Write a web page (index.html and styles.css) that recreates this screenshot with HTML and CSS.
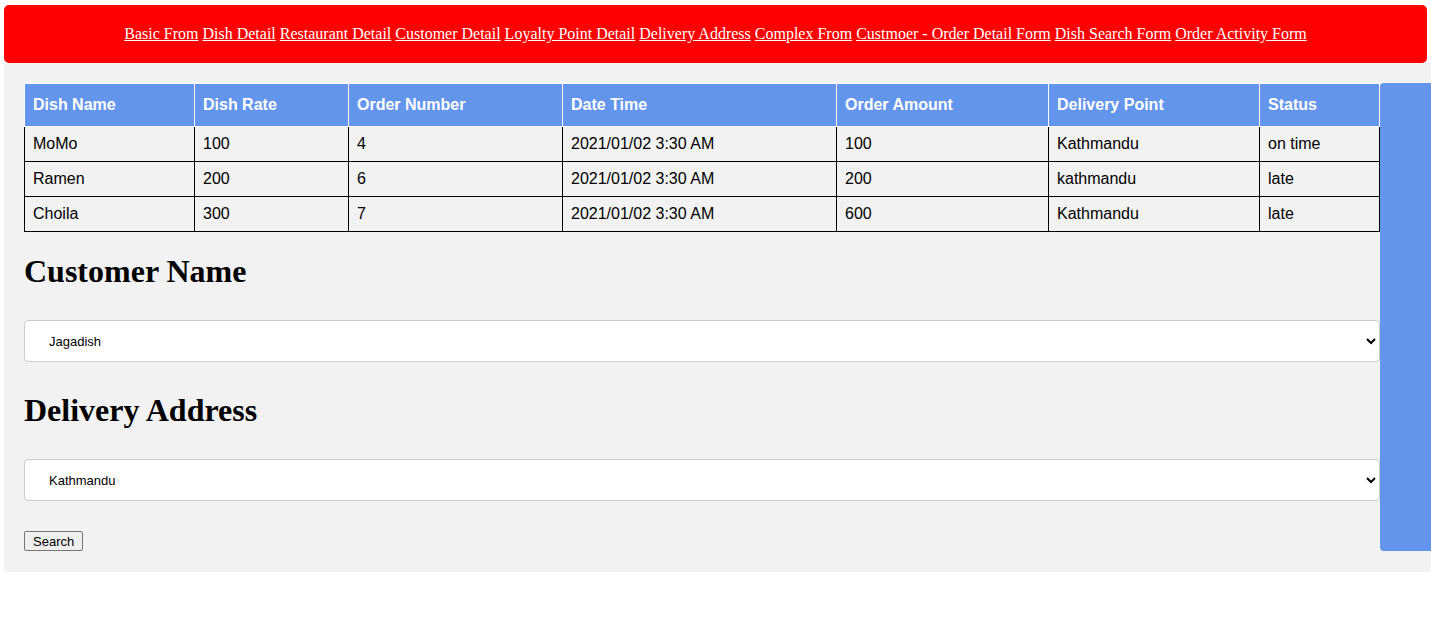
FILE: index.html
```html
<!DOCTYPE html>
<html>
<head>
<meta charset="utf-8">
<link rel="stylesheet" href="styles.css">
</head>
<body>
<nav class="topnav">
  <a href="#">Basic From</a> <a href="#">Dish Detail</a> <a href="#">Restaurant Detail</a> <a href="#">Customer Detail</a> <a href="#">Loyalty Point Detail</a> <a href="#">Delivery Address</a> <a href="#">Complex From</a> <a href="#">Custmoer - Order Detail Form</a> <a href="#">Dish Search Form</a> <a href="#">Order Activity Form</a>
</nav>
<div class="page">
  <main class="main">
    <table class="orders">
      <thead>
        <tr>
          <th class="c1">Dish Name</th><th class="c2">Dish Rate</th><th class="c3">Order Number</th><th class="c4">Date Time</th><th class="c5">Order Amount</th><th class="c6">Delivery Point</th><th class="c7">Status</th>
        </tr>
      </thead>
      <tbody>
        <tr><td>MoMo</td><td>100</td><td>4</td><td>2021/01/02 3:30 AM</td><td>100</td><td>Kathmandu</td><td>on time</td></tr>
        <tr><td>Ramen</td><td>200</td><td>6</td><td>2021/01/02 3:30 AM</td><td>200</td><td>kathmandu</td><td>late</td></tr>
        <tr><td>Choila</td><td>300</td><td>7</td><td>2021/01/02 3:30 AM</td><td>600</td><td>Kathmandu</td><td>late</td></tr>
      </tbody>
    </table>
    <h1 class="heading">Customer Name</h1>
    <select class="picker"><option>Jagadish</option></select>
    <h1 class="heading">Delivery Address</h1>
    <select class="picker"><option>Kathmandu</option></select>
    <div class="actions"><button class="btn">Search</button></div>
  </main>
  <aside class="side"></aside>
</div>
</body>
</html>
```
FILE: styles.css
```css
body {
  margin: 5px 0 0 4px;
  font-family: "Liberation Serif", "Times New Roman", serif;
  background: #fff;
}
.topnav {
  background: #ff0000;
  border-radius: 5px;
  margin-right: 4px;
  padding: 20px 10px 20px;
  text-align: center;
  font-size: 16px;
  line-height: 18px;
}
.topnav a { color: #fff; text-decoration: underline; }
.page {
  display: flex;
  background: #f2f2f2;
  padding: 20px 0 21px 20px;
  border-radius: 0 0 0 4px;
}
.main {
  flex: 1;
  display: flex;
  flex-direction: column;
  align-items: flex-start;
}
.side {
  width: 51px;
  background: #6495ed;
  border-radius: 4px 0 0 4px;
}
.orders {
  width: 100%;
  border-collapse: collapse;
  font-family: "Liberation Sans", Arial, sans-serif;
  font-size: 16px;
}
.orders th {
  background: #6495ed;
  color: #fff;
  text-align: left;
  font-weight: bold;
  border: 1px solid #fff;
  padding: 0 8px;
  height: 42px;
}
.orders td {
  border: 1px solid #000;
  padding: 0 8px;
  height: 34px;
  color: #000;
}
.c1 { width: 153px; }
.c2 { width: 137px; }
.c3 { width: 197px; }
.c4 { width: 257px; }
.c5 { width: 195px; }
.c6 { width: 194px; }
.heading {
  font-size: 32px;
  font-weight: bold;
  margin: 21px 0 0;
  line-height: 37px;
}
.picker {
  width: 100%;
  height: 42px;
  margin-top: 30px;
  padding: 0 20px;
  background: #fff;
  border: 1px solid #ccc;
  border-radius: 4px;
  font-family: "Liberation Sans", Arial, sans-serif;
  font-size: 13px;
  color: #000;
}
.picker + .heading { margin-top: 30px; }
.actions { margin-top: 30px; display: flex; }
.btn {
  font-family: "Liberation Sans", Arial, sans-serif;
  font-size: 13px;
  padding: 0 8px;
  height: 20px;
  border: 1px solid #767676;
  border-radius: 2px;
  background: #efefef;
  color: #000;
}
```
